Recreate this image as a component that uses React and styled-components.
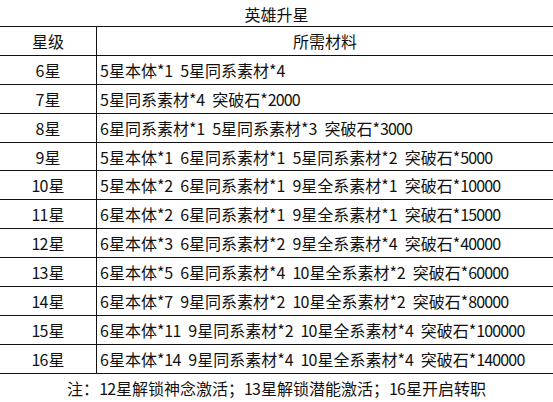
import React from 'react';
import styled, { createGlobalStyle } from 'styled-components';

const GlobalStyle = createGlobalStyle`
  html, body {
    margin: 0;
    padding: 0;
    background: #fff;
  }
  body {
    font-family: "Noto Sans CJK SC", "Noto Sans", sans-serif;
    color: #111;
  }
`;

const rows = [
  { level: '6星', items: ['5星本体*1', '5星同系素材*4'] },
  { level: '7星', items: ['5星同系素材*4', '突破石*2000'] },
  { level: '8星', items: ['6星同系素材*1', '5星同系素材*3', '突破石*3000'] },
  { level: '9星', items: ['5星本体*1', '6星同系素材*1', '5星同系素材*2', '突破石*5000'] },
  { level: '10星', items: ['5星本体*2', '6星同系素材*1', '9星全系素材*1', '突破石*10000'] },
  { level: '11星', items: ['6星本体*2', '6星同系素材*1', '9星全系素材*1', '突破石*15000'] },
  { level: '12星', items: ['6星本体*3', '6星同系素材*2', '9星全系素材*4', '突破石*40000'] },
  { level: '13星', items: ['6星本体*5', '6星同系素材*4', '10星全系素材*2', '突破石*60000'] },
  { level: '14星', items: ['6星本体*7', '9星同系素材*2', '10星全系素材*2', '突破石*80000'] },
  { level: '15星', items: ['6星本体*11', '9星同系素材*2', '10星全系素材*4', '突破石*100000'] },
  { level: '16星', items: ['6星本体*14', '9星同系素材*4', '10星全系素材*4', '突破石*140000'] },
];

const Page = styled.div`
  width: 553px;
  height: 402px;
  display: flex;
  flex-direction: column;
  font-size: 16px;
`;

const Title = styled.div`
  height: 26px;
  line-height: 28px;
  text-align: center;
`;

const Table = styled.div`
  display: grid;
  grid-template-columns: 97px 456px;
  grid-auto-rows: 28.9px;
  border-top: 1.5px solid #111;
`;

const Cell = styled.div`
  box-sizing: border-box;
  border-bottom: 1.5px solid #111;
  line-height: 29px;
  white-space: nowrap;
`;

const LevelCell = styled(Cell)`
  text-align: center;
  border-right: 1.5px solid #111;
`;

const HeadCell = styled(Cell)`
  text-align: center;
`;

const ItemsCell = styled(Cell)`
  display: flex;
  gap: 7px;
  padding-left: 3px;
`;

const Item = styled.span`
  display: inline-block;
`;

// digits in the shot are narrower than Noto's
const Num = styled.span`
  letter-spacing: -0.85px;
  margin-right: 0.85px;
`;

const Note = styled.div`
  flex: 1;
  line-height: 28px;
  text-align: center;
`;

const renderText = (text) =>
  text.split(/(\d+)/).map((part, i) =>
    /^\d+$/.test(part) ? <Num key={i}>{part}</Num> : part
  );

export default function App() {
  return (
    <Page>
      <GlobalStyle />
      <Title>英雄升星</Title>
      <Table>
        <LevelCell>星级</LevelCell>
        <HeadCell>所需材料</HeadCell>
        {rows.map((row) => (
          <React.Fragment key={row.level}>
            <LevelCell>{renderText(row.level)}</LevelCell>
            <ItemsCell>
              {row.items.map((item) => (
                <Item key={item}>{renderText(item)}</Item>
              ))}
            </ItemsCell>
          </React.Fragment>
        ))}
      </Table>
      <Note>{renderText('注：12星解锁神念激活；13星解锁潜能激活；16星开启转职')}</Note>
    </Page>
  );
}
